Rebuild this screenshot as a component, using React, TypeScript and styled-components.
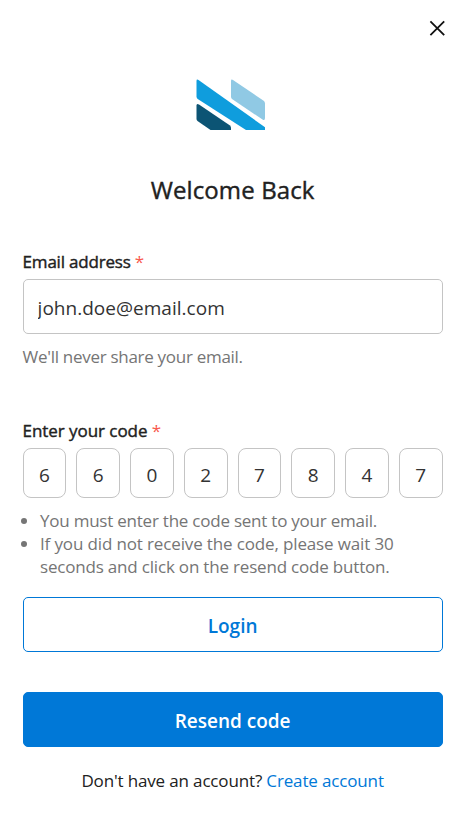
import React from "react";
import styled, { createGlobalStyle } from "styled-components";

const GlobalStyle = createGlobalStyle`
  *, *::before, *::after { box-sizing: border-box; }
  body {
    margin: 0;
    background: #fff;
    color: #212121;
    font-family: "Segoe UI", "Open Sans", "Noto Sans", sans-serif;
    font-size: 17px;
    line-height: 23px;
  }
`;

const Dialog = styled.main`
  display: flex;
  flex-direction: column;
  height: 836px;
  padding: 16px 23.4px 0 22.6px;
`;

const CloseButton = styled.button`
  align-self: flex-end;
  display: flex;
  width: 24px;
  height: 24px;
  margin-right: -6.4px;
  padding: 0;
  border: 0;
  background: none;
  color: #111;
`;

const Logo = styled.svg`
  align-self: center;
  width: 70px;
  height: 52px;
  margin: 39px 4.2px 0 0;
`;

const Title = styled.h1`
  margin: 43px 0 0;
  text-align: center;
  font-size: 24px;
  font-weight: 400;
  line-height: 32px;
  letter-spacing: 0.12px;
  -webkit-text-stroke: 0.4px currentColor;
`;

const Form = styled.form`
  display: flex;
  flex-direction: column;
  margin-top: 44px;
`;

const Label = styled.label<{ $tracking: number }>`
  height: 23px;
  white-space: pre;
  letter-spacing: ${(p) => p.$tracking}px;
  -webkit-text-stroke: 0.4px currentColor;
`;

const Required = styled.span`
  color: #f8594d;
  -webkit-text-stroke: 0;
`;

const EmailInput = styled.input`
  height: 55px;
  margin-top: 6px;
  padding: 2px 14px 0;
  border: 1px solid #c4c4c4;
  border-radius: 5px;
  outline: 0;
  background: #fff;
  color: #333;
  font: 400 19px "Segoe UI", "Open Sans", sans-serif;
  letter-spacing: 0.02px;
`;

const Hint = styled.p`
  margin: 11px 0 0;
  color: #757575;
  letter-spacing: -0.29px;
`;

const CodeLabel = styled(Label)`
  margin-top: 51px;
`;

const CodeRow = styled.div`
  display: grid;
  grid-template-columns: repeat(8, 1fr);
  gap: 10px;
  margin-top: 6px;
`;

const Digit = styled.input`
  width: 100%;
  height: 50px;
  padding: 3px 0 0;
  border: 1px solid #c4c4c4;
  border-radius: 8px;
  outline: 0;
  background: #fff;
  color: #333;
  text-align: center;
  font: 400 19px "Segoe UI", "Open Sans", sans-serif;
`;

const Notes = styled.ul`
  margin: 11px 0 0;
  padding: 0;
  list-style: none;
  color: #757575;
`;

const Note = styled.li`
  display: flex;
  align-items: flex-start;

  &::before {
    content: "";
    flex: none;
    width: 6px;
    height: 6px;
    margin: 9px 13px 0 -1.6px;
    border-radius: 50%;
    background: #757575;
  }
`;

const NoteLine = styled.span<{ $tracking: number }>`
  display: block;
  white-space: nowrap;
  letter-spacing: ${(p) => p.$tracking}px;
`;

const Button = styled.button<{ $primary?: boolean }>`
  height: 55px;
  margin-top: ${(p) => (p.$primary ? 40 : 19)}px;
  padding: 2px 0 0;
  border: 1px solid #0078d7;
  border-radius: 5px;
  background: ${(p) => (p.$primary ? "#0078d7" : "#fff")};
  color: ${(p) => (p.$primary ? "#fff" : "#0078d7")};
  font: 600 19px "Segoe UI", "Open Sans", sans-serif;
`;

const Footer = styled.p`
  margin: 22px 0 0;
  text-align: center;
  letter-spacing: -0.15px;
`;

const Link = styled.a`
  color: #0078d7;
  text-decoration: none;
`;

const CODE = ["6", "6", "0", "2", "7", "8", "4", "7"];

export default function App() {
  return (
    <>
      <GlobalStyle />
      <Dialog>
        <CloseButton aria-label="Close">
          <svg width="24" height="24" viewBox="0 0 24 24" stroke="currentColor" strokeWidth="1.8">
            <path d="M5.4 5.4 19.200 19.200M19.200 5.400 5.400 19.200" />
          </svg>
        </CloseButton>
        <Logo viewBox="0 0 70 52" aria-hidden="true">
          <path fill="#0f9ddd" d="M.5 2Q.5-.3 2.5 1L69 48.2V51H50L1.700 20Q.5 19 .5 17.500Z" />
          <path fill="#90c9e4" d="M35 2Q35-.3 37 1L68 22Q69 23 69 24.500V39Q69 42 66.500 40.500L36 20Q35 19 35 17.500Z" />
          <path fill="#0c5474" d="M.5 26.500Q.5 24 3 25.500L34 46.500Q35 47.500 35 49V51H14.500L1.500 42Q.5 41 .5 40Z" />
        </Logo>
        <Title>Welcome Back</Title>
        <Form onSubmit={(e) => e.preventDefault()}>
          <Label htmlFor="email" $tracking={-0.2}>
            Email address <Required>*</Required>
          </Label>
          <EmailInput id="email" defaultValue="john.doe@email.com" />
          <Hint>We'll never share your email.</Hint>
          <CodeLabel htmlFor="code-0" $tracking={-0.06}>
            Enter your code <Required>*</Required>
          </CodeLabel>
          <CodeRow>
            {CODE.map((digit, i) => (
              <Digit key={i} id={`code-${i}`} maxLength={1} defaultValue={digit} />
            ))}
          </CodeRow>
          <Notes>
            <Note>
              <NoteLine $tracking={-0.23}>You must enter the code sent to your email.</NoteLine>
            </Note>
            <Note>
              <div>
                <NoteLine $tracking={-0.14}>If you did not receive the code, please wait 30</NoteLine>
                <NoteLine $tracking={-0.19}>seconds and click on the resend code button.</NoteLine>
              </div>
            </Note>
          </Notes>
          <Button type="submit">Login</Button>
          <Button type="button" $primary>Resend code</Button>
        </Form>
        <Footer>
          Don't have an account? <Link href="#">Create account</Link>
        </Footer>
      </Dialog>
    </>
  );
}
